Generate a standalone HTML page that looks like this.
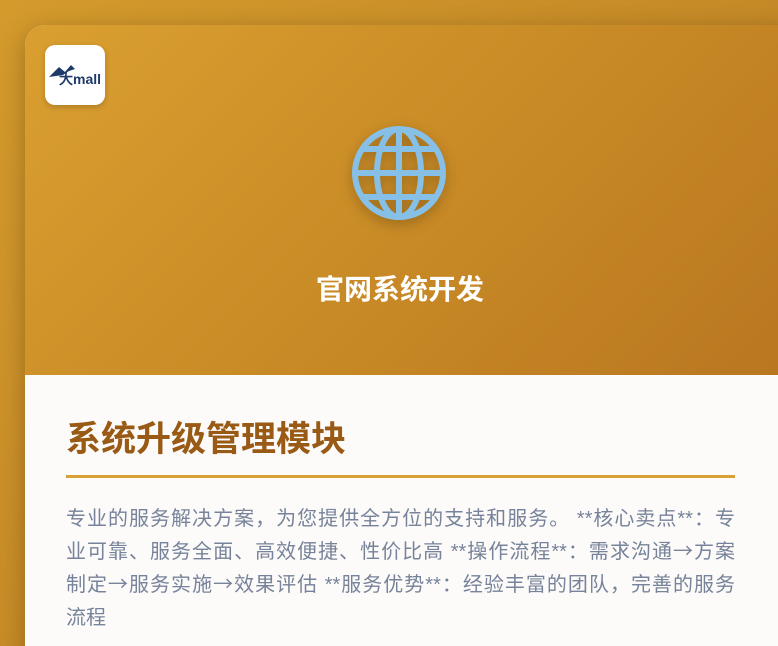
<!DOCTYPE html>
<html><head><meta charset="utf-8"><style>
html,body{margin:0;padding:0;width:778px;height:646px;overflow:hidden;}
body{background:linear-gradient(135deg,#d49a2c,#b87a22);font-family:"Liberation Sans","Noto Sans CJK SC",sans-serif;position:relative;}
.card{position:absolute;left:25px;top:25px;width:780px;height:660px;border-radius:20px;overflow:hidden;background:#fdfbf9;box-shadow:0 6px 24px rgba(0,0,0,.25);}
.hdr{height:350px;background:linear-gradient(135deg,#da9f30 0%,#c98b26 50%,#b87620 100%);position:relative;}
.logo{position:absolute;left:20px;top:20px;width:60px;height:60px;background:#fff;border-radius:10px;box-shadow:0 2px 6px rgba(0,0,0,.2);}
.globe{position:absolute;left:326px;top:100px;filter:drop-shadow(0 4px 6px rgba(0,0,0,.25));}
.htitle{position:absolute;left:0;width:750px;top:243px;text-align:center;color:#fff;font-size:28px;font-weight:bold;}
.body{padding:0 41px;}
h1{margin:0;padding-top:44px;font-size:35px;line-height:42px;color:#985a14;font-weight:bold;}
.line{margin-top:14px;width:669px;height:3px;background:#d9a035;}
.p{margin-top:25px;width:669px;font-size:20px;line-height:33px;color:#76839a;}
.p div{white-space:nowrap;text-align:justify;text-align-last:justify;height:33px;overflow:visible;}
.p div.last{text-align-last:left;}
.a{font-family:"Noto Sans CJK SC",sans-serif;line-height:1;}
</style></head><body>
<div class="card">
 <div class="hdr">
  <div class="logo">
   <svg width="60" height="60" viewBox="0 0 60 60">
    <path d="M4 32 L14 22 L20 27 L26 20 L30 24 L24 26 L18 30 Z" fill="#1e3a6a"/>
    <text x="14" y="39" font-family="Liberation Sans" font-weight="bold" font-size="14" fill="#1e3a6a">大mall</text>
   </svg>
  </div>
  <svg class="globe" width="96" height="96" viewBox="0 0 96 96" fill="none" stroke="#86c0e6" stroke-width="6">
   <circle cx="48" cy="48" r="44"/>
   <ellipse cx="48" cy="48" rx="22" ry="44"/>
   <line x1="48" y1="4" x2="48" y2="92"/>
   <line x1="4" y1="48" x2="92" y2="48"/>
   <line x1="10" y1="24" x2="86" y2="24"/>
   <line x1="10" y1="72" x2="86" y2="72"/>
  </svg>
  <div class="htitle">官网系统开发</div>
 </div>
 <div class="body">
  <h1>系统升级管理模块</h1>
  <div class="line"></div>
  <div class="p">
   <div>专业的服务解决方案，为您提供全方位的支持和服务。 **核心卖点**：专</div>
   <div>业可靠、服务全面、高效便捷、性价比高 **操作流程**：需求沟通<span class="a">→</span>方案</div>
   <div>制定<span class="a">→</span>服务实施<span class="a">→</span>效果评估 **服务优势**：经验丰富的团队，完善的服务</div>
   <div class="last">流程</div>
  </div>
 </div>
</div>
</body></html>
